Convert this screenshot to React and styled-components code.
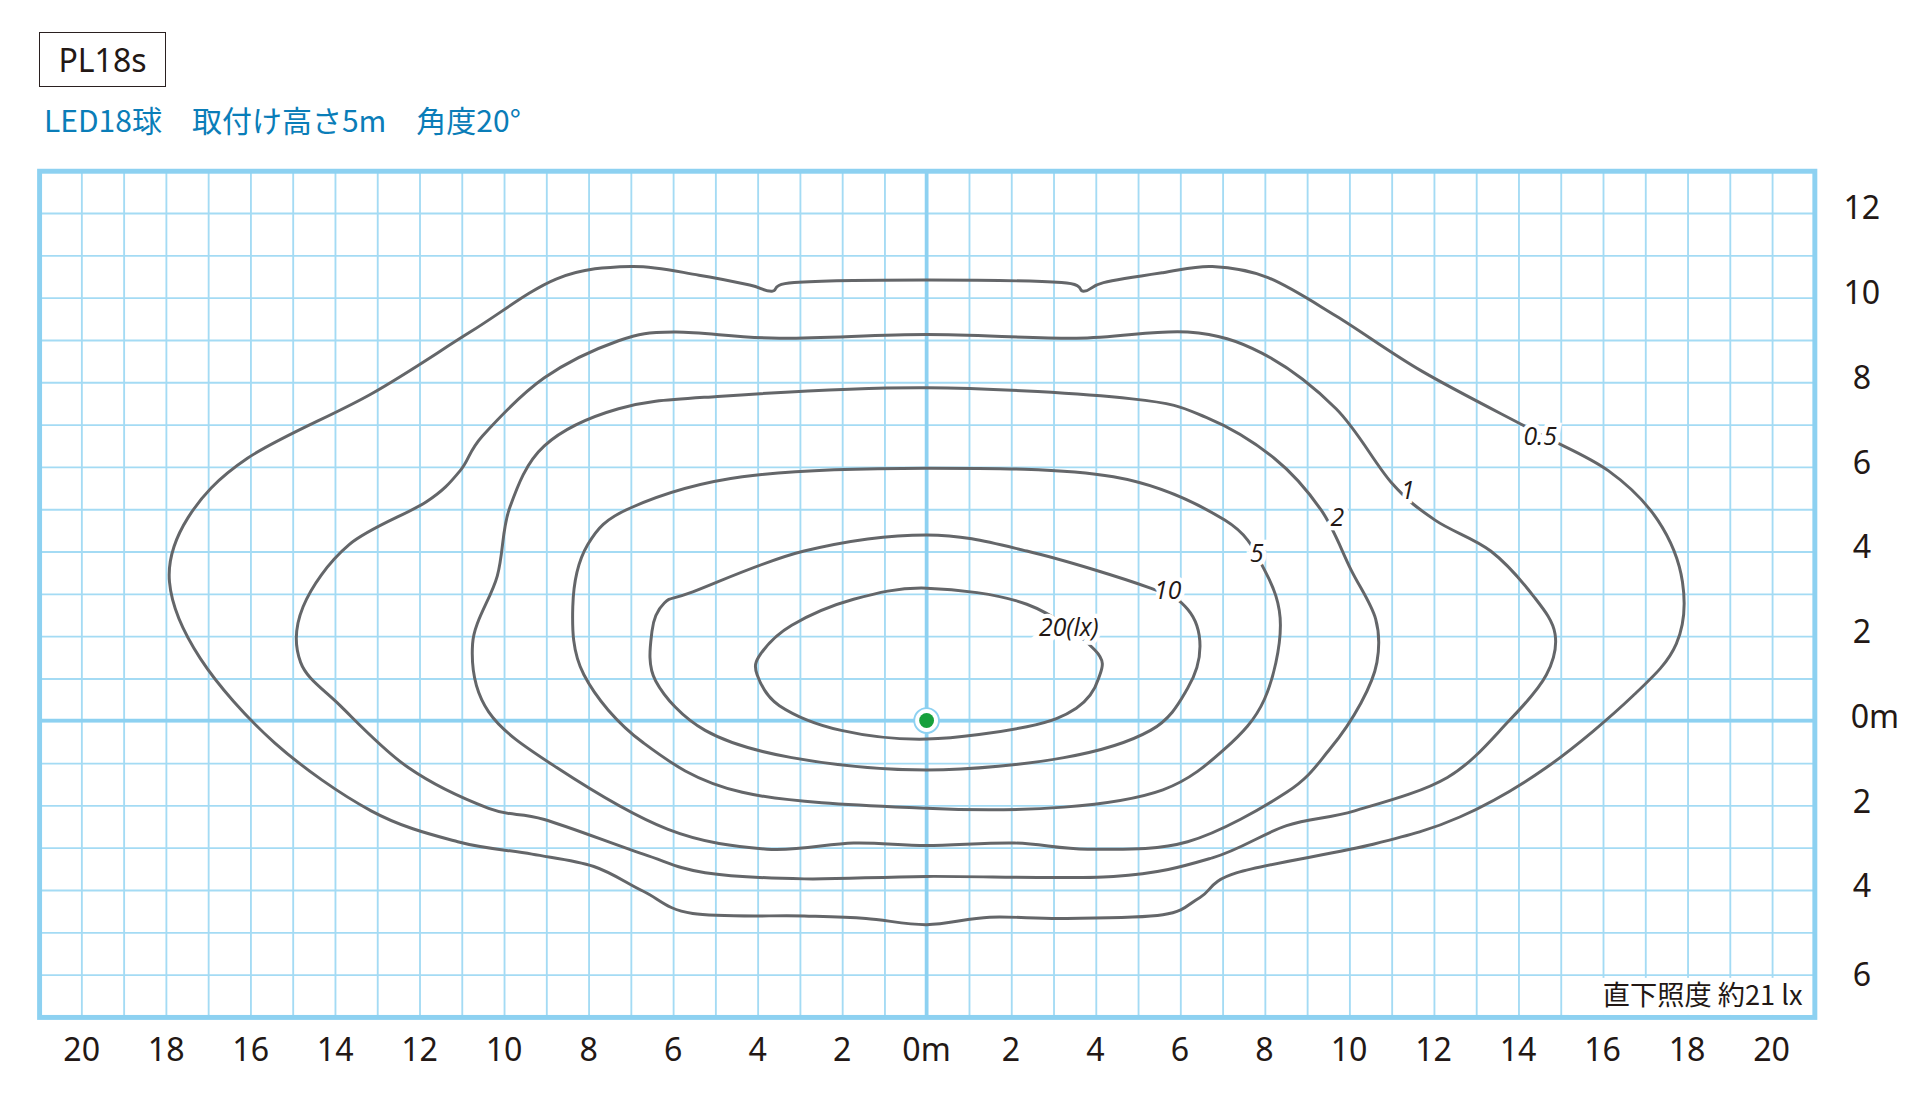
import React from "react";
import styled, { createGlobalStyle } from "styled-components";

const GlobalStyle = createGlobalStyle`
  html, body { margin: 0; padding: 0; background: #fff; }
  body { font-family: "Noto Sans", "Noto Sans CJK JP", sans-serif; }
`;

const Page = styled.div`
  width: 1920px;
  height: 1093px;
  overflow: hidden;
  background: #fff;
`;

const Header = styled.div`
  height: 160px;
  padding-left: 39px;
  padding-top: 32px;
  box-sizing: border-box;
  display: flex;
  flex-direction: column;
  align-items: flex-start;
  gap: 12px;
`;

const ModelBox = styled.div`
  width: 127px;
  height: 55px;
  box-sizing: border-box;
  border: 1.5px solid #2a2020;
  display: flex;
  align-items: center;
  justify-content: center;
  font-family: "Noto Sans", sans-serif;
  font-size: 32px;
  color: #231815;
`;

const Spec = styled.div`
  font-family: "Noto Sans CJK JP", sans-serif;
  font-size: 30px;
  line-height: 40px;
  color: #0a7db8;
  padding-left: 5px;
  white-space: pre;
`;

const Chart = styled.svg`
  display: block;
  width: 1920px;
  height: 933px;
`;

const X0 = 32, X1 = 1467, Y0 = 138, Y1 = 822, CX = 749, CY = 582;
const CW = (X1 - X0) / 42, CH = (Y1 - Y0) / 20;

const smooth = (pts) => {
  const n = pts.length;
  let d = `M${pts[0][0]},${pts[0][1]}`;
  for (let i = 0; i < n; i++) {
    const p0 = pts[(i - 1 + n) % n], p1 = pts[i], p2 = pts[(i + 1) % n], p3 = pts[(i + 2) % n];
    const c1 = [p1[0] + (p2[0] - p0[0]) / 6, p1[1] + (p2[1] - p0[1]) / 6];
    const c2 = [p2[0] - (p3[0] - p1[0]) / 6, p2[1] - (p3[1] - p1[1]) / 6];
    d += ` C${c1[0]},${c1[1]} ${c2[0]},${c2[1]} ${p2[0]},${p2[1]}`;
  }
  return d + "Z";
};

const contours = [
  [[749,475],[830,488],[885,525],[888,548],[870,572],[830,587],[749,597],[680,590],[630,570],[612,545],[615,528],[640,505],[690,484]],
  [[749,432],[830,445],[930,475],[960,492],[970,522],[960,556],[930,590],[860,612],[749,622],[640,612],[570,590],[530,550],[527,510],[537,487],[560,478],[650,445]],
  [[749,378],[900,385],[990,420],[1022,460],[1035,505],[1022,565],[990,605],[940,638],[860,652],[749,653],[600,640],[520,600],[472,545],[463,490],[475,440],[510,410],[600,385]],
  [[749,313],[915,322],[975,337],[1030,370],[1068,412],[1092,460],[1112,500],[1113,535],[1100,568],[1075,605],[1040,640],[960,680],[880,686],[820,681],[749,683],[690,681],[620,686],[540,670],[450,620],[395,575],[382,520],[402,465],[412,410],[440,360],[500,330],[580,320]],
  [[749,270],[870,273],[960,268],[1020,285],[1080,330],[1125,390],[1160,420],[1205,445],[1240,482],[1257,512],[1250,545],[1220,582],[1170,628],[1095,655],[1040,667],[980,693],[900,708],[749,708],[650,710],[570,705],[520,690],[440,662],[395,653],[330,620],[275,570],[243,535],[245,490],[282,440],[345,405],[372,380],[390,352],[440,305],[500,275],[545,268],[630,273]],
  [[749,226],[858,228],[876,235],[892,228],[940,220],[980,215],[1025,224],[1080,255],[1150,300],[1240,348],[1300,380],[1340,420],[1360,470],[1355,520],[1320,562],[1250,620],[1180,660],[1110,682],[1000,705],[970,725],[940,739],[860,742],[800,741],[749,747],[700,742],[650,740],[560,738],[520,720],[480,700],[430,690],[370,680],[300,655],[222,600],[162,532],[137,470],[152,418],[200,370],[300,318],[380,268],[450,225],[510,215],[565,222],[606,230],[624,235],[642,228]],
];

const labels = [
  ["20(lx)", 864, 514], ["10", 944, 484], ["5", 1016, 454], ["2", 1081, 425], ["1", 1138, 403], ["0.5", 1245, 359],
];

const LineLabel = styled.text`
  font-family: "Open Sans", sans-serif;
  font-style: italic;
  font-size: 20px;
  fill: #231815;
  stroke: #fff;
  stroke-width: 7px;
  paint-order: stroke;
  text-anchor: middle;
`;

const AxisLabel = styled.text`
  font-family: "Noto Sans", sans-serif;
  font-size: 26px;
  fill: #231815;
  text-anchor: ${(p) => p.$anchor || "middle"};
`;

const Note = styled(AxisLabel)`
  font-family: "Noto Sans CJK JP", sans-serif;
  font-size: 22px;
`;

export default function App() {
  const vlines = Array.from({ length: 43 }, (_, i) => X0 + i * CW);
  const hlines = Array.from({ length: 21 }, (_, i) => Y0 + i * CH);
  const xLabels = [20, 18, 16, 14, 12, 10, 8, 6, 4, 2, "0m", 2, 4, 6, 8, 10, 12, 14, 16, 18, 20];
  const yLabels = [12, 10, 8, 6, 4, 2, "0m", 2, 4, 6];
  return (
    <Page>
      <GlobalStyle />
      <Header>
        <ModelBox>PL18s</ModelBox>
        <Spec>{"LED18球　取付け高さ5m　角度20°"}</Spec>
      </Header>
      <Chart viewBox="0 129 1552 754">
        {vlines.map((x, i) => (
          <line key={"v" + i} x1={x} x2={x} y1={Y0} y2={Y1} stroke="#a4dbf4" strokeWidth="1.5" />
        ))}
        {hlines.map((y, i) => (
          <line key={"h" + i} x1={X0} x2={X1} y1={y} y2={y} stroke="#a4dbf4" strokeWidth="1.5" />
        ))}
        <line x1={CX} x2={CX} y1={Y0} y2={Y1} stroke="#8dd1f1" strokeWidth="3" />
        <line x1={X0} x2={X1} y1={CY} y2={CY} stroke="#8dd1f1" strokeWidth="3" />
        <rect x={X0} y={Y0} width={X1 - X0} height={Y1 - Y0} fill="none" stroke="#8dd1f1" strokeWidth="4" />
        {contours.map((c, i) => (
          <path key={i} d={smooth(c)} fill="none" stroke="#646669" strokeWidth="2.4" />
        ))}
        {labels.map(([t, x, y]) => (
          <LineLabel key={t} x={x} y={y}>{t}</LineLabel>
        ))}
        <circle cx={CX} cy={CY} r="10" fill="#fff" stroke="#8dd1f1" strokeWidth="1.5" />
        <circle cx={CX} cy={CY} r="6" fill="#16a03c" />
        <rect x="1268" y="790" width="196" height="30" fill="#fff" />
        <Note x="1457" y="812" $anchor="end">直下照度 約21 lx</Note>
        {xLabels.map((t, i) => (
          <AxisLabel key={"x" + i} x={66 + i * 68.3} y="857">{t}</AxisLabel>
        ))}
        {yLabels.map((t, i) => (
          <AxisLabel key={"y" + i} x={t === "0m" ? 1496 : 1505} y={(i === 9 ? 797 : 177 + i * 68.5)} $anchor={t === "0m" ? "start" : "middle"}>{t}</AxisLabel>
        ))}
      </Chart>
    </Page>
  );
}
